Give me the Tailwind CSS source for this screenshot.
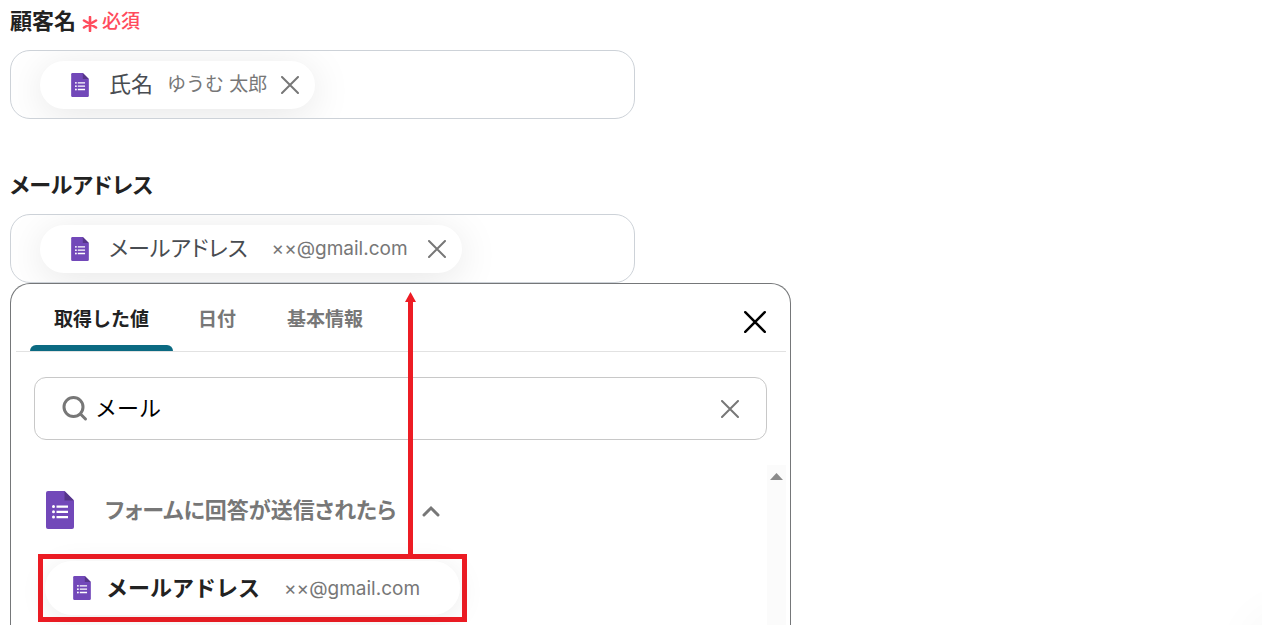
<!DOCTYPE html>
<html lang="ja">
<head>
  <meta charset="UTF-8" />
  <meta name="viewport" content="width=device-width, initial-scale=1" />
  <title>顧客フォーム</title>
  <script src="https://cdn.jsdelivr.net/npm/@tailwindcss/browser@4"></script>
</head>
<body class="overflow-hidden bg-white font-['Inter','Noto_Sans_CJK_JP',sans-serif] text-[#222]">

  <!-- Shared icons -->
  <svg class="hidden">
    <symbol id="form" viewBox="0 0 28 38">
      <path fill="#7248b9" d="M2 0H18.500L28 9.500V36A2 2 0 0 1 26 38H2A2 2 0 0 1 0 36V2A2 2 0 0 1 2 0Z" />
      <path fill="#563589" d="M18.500 0 28 9.500H18.500Z" />
      <path fill="#fff" d="M10.500 14.500H22v2.200H10.500zM10.500 19.700H22v2.200H10.500zM10.500 25H22v2.200H10.500z" />
      <circle cx="7.500" cy="15.600" r="1.500" fill="#fff" />
      <circle cx="7.500" cy="20.800" r="1.500" fill="#fff" />
      <circle cx="7.500" cy="26.100" r="1.500" fill="#fff" />
    </symbol>
    <symbol id="close" viewBox="0 0 18 18">
      <path d="M1 1 17 17M17 1 1 17" fill="none" stroke="currentColor" stroke-width="2" stroke-linecap="round" />
    </symbol>
  </svg>

  <main class="flex h-screen flex-col px-2.5 pt-[5px]">

    <!-- Customer name -->
    <section class="w-full max-w-[625px]">
      <h2 class="flex h-8 items-center gap-1.5 text-[22px] font-bold">
        顧客名
        <span class="flex items-center gap-1 pt-0.5 text-[19px] font-medium text-[#ff4b5c]">
          <svg class="mt-1 size-4" viewBox="0 0 16 16"><path d="M8 1V15M2 4.500 14 11.500M14 4.500 2 11.500" stroke="currentColor" stroke-width="2.600" stroke-linecap="round" /></svg>
          必須
        </span>
      </h2>
      <div class="mt-[13px] flex h-[69px] items-center overflow-hidden rounded-[20px] border border-[#cdd2d8] px-[29px]">
        <div class="flex h-12 items-center rounded-full bg-white pr-4 pl-[31px] shadow-[0_6px_40px_rgba(0,0,0,0.1)]">
          <svg class="h-6 w-[18px]"><use href="#form" /></svg>
          <span class="ml-5 text-[22px] text-[#484c51]">氏名</span>
          <span class="ml-3.5 pt-0.5 text-[19px] text-[#777]">ゆうむ 太郎</span>
          <button type="button" aria-label="氏名を削除" class="ml-3.5 text-[#777]"><svg class="size-[18px]"><use href="#close" /></svg></button>
        </div>
      </div>
    </section>

    <!-- Mail address -->
    <section class="mt-[50px] w-full max-w-[625px]">
      <h2 class="flex h-8 items-center text-[22px] font-bold [font-feature-settings:'palt']">メールアドレス</h2>
      <div class="mt-[13px] flex h-[69px] items-center overflow-hidden rounded-[20px] border border-[#cdd2d8] px-[29px]">
        <div class="flex h-12 items-center rounded-full bg-white pr-4 pl-[31px] shadow-[0_6px_40px_rgba(0,0,0,0.1)]">
          <svg class="h-6 w-[18px]"><use href="#form" /></svg>
          <span class="ml-5 text-[22px] text-[#484c51] [font-feature-settings:'palt']">メールアドレス</span>
          <span class="ml-6 pt-0.5 text-[19px] text-[#777]">××@gmail.com</span>
          <button type="button" aria-label="メールアドレスを削除" class="ml-5 text-[#777]"><svg class="size-[18px]"><use href="#close" /></svg></button>
        </div>
      </div>
    </section>

    <!-- Value picker -->
    <section class="flex min-h-0 w-full max-w-[781px] flex-1 flex-col rounded-t-[20px] border border-b-0 border-[#757779] bg-white pr-1 pl-[5px]">
      <div class="flex h-[68px] shrink-0 items-center justify-between border-b border-[#e2e2e2] pr-5 pl-3.5">
        <nav class="flex h-full text-[19px] font-bold text-[#777]">
          <button type="button" class="relative w-[143px] pt-1.5 text-[#222]">
            取得した値
            <span class="absolute inset-x-0 bottom-0 h-1.5 rounded-t-md bg-[#0b6a82]"></span>
          </button>
          <button type="button" class="w-[88px] pt-1.5">日付</button>
          <button type="button" class="w-32 pt-1.5">基本情報</button>
        </nav>
        <button type="button" aria-label="閉じる" class="mt-2 text-black"><svg class="size-[22px]"><use href="#close" /></svg></button>
      </div>

      <label class="mt-[25px] mr-[19px] ml-[18px] flex h-[63px] shrink-0 items-center rounded-xl border border-[#c8c8c8] px-[27px]">
        <svg class="size-[26px] text-[#777]" viewBox="0 0 26 26" fill="none" stroke="currentColor" stroke-width="3" stroke-linecap="round"><circle cx="11.500" cy="11" r="9.500" /><path d="m18.500 18 5 5" /></svg>
        <input type="text" value="メール" aria-label="検索" class="ml-[7px] min-w-0 flex-1 text-[22px] text-black outline-none" />
        <button type="button" aria-label="クリア" class="text-[#777]"><svg class="size-[18px]"><use href="#close" /></svg></button>
      </label>

      <div class="mt-[25px] flex min-h-0 flex-1">
        <div class="flex-1 pt-[23px] pl-[22px]">
          <button type="button" class="ml-2 flex h-11 items-center text-[22px] font-bold text-[#777]">
            <svg class="h-[38px] w-7"><use href="#form" /></svg>
            <span class="ml-[31px] [font-feature-settings:'palt']">フォームに回答が送信されたら</span>
            <svg class="ml-[26px] mt-0.5 h-3 w-[18px]" viewBox="0 0 18 12"><path d="M2 10 9 3l7 7" fill="none" stroke="currentColor" stroke-width="3" stroke-linecap="round" /></svg>
          </button>

          <!-- Highlighted row with its arrow -->
          <div class="relative mt-[22px] h-[68px] w-[429px] border-[5px] border-[#ed1c24] p-0.5">
            <svg class="absolute bottom-full left-[362px] h-[267px] w-[11px]" viewBox="0 0 11 267" fill="#ed1c24"><path d="M5.500 0 11 10H8V267H3V10H0Z" /></svg>
            <button type="button" class="flex h-[54px] w-full items-center rounded-full bg-white pl-7 shadow-[0_4px_28px_rgba(0,0,0,0.08)]">
              <svg class="h-6 w-[18px]"><use href="#form" /></svg>
              <span class="ml-[15px] text-[22px] font-bold">メールアドレス</span>
              <span class="ml-6 pt-0.5 text-[19px] text-[#777]">××@gmail.com</span>
            </button>
          </div>
        </div>
        <div class="flex w-[19px] justify-center bg-[#fbfbfb] pt-2">
          <svg class="h-[7px] w-[13px]" viewBox="0 0 13 7"><path d="M6.500 0 13 7H0Z" fill="#8b8b8b" /></svg>
        </div>
      </div>
    </section>
  </main>

  <!-- Floating widget just off the corner, only its shadow shows -->
  <div class="fixed -right-14 -bottom-14 size-12 rounded-full shadow-[0_0_55px_15px_rgba(0,0,0,0.06)]"></div>
</body>
</html>
